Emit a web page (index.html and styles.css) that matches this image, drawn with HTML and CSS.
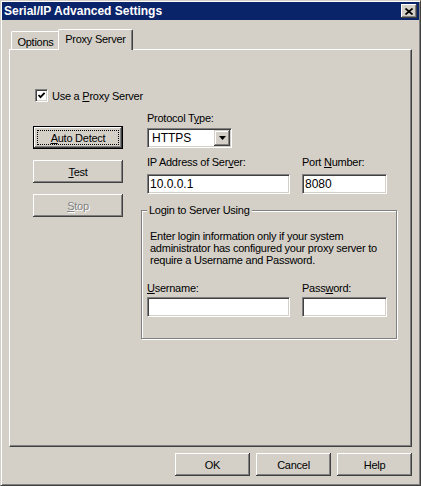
FILE: index.html
```html
<!DOCTYPE html>
<html lang="en">
<head>
    <meta charset="UTF-8">
    <title>Serial/IP Advanced Settings</title>
    <link rel="stylesheet" href="styles.css">
</head>
<body>
    <div class="window">
        <div class="titlebar">
            <span class="title">Serial/IP Advanced Settings</span>
            <span class="close-btn">
                <svg width="8" height="7" viewBox="0 0 8 7"><path d="M0.5 0.5 L7.5 6.5 M7.5 0.5 L0.5 6.5" stroke="#000" stroke-width="1.7"/></svg>
            </span>
        </div>

        <div class="tabs">
            <div class="tab">Options</div>
            <div class="tab tab-active">Proxy Server</div>
        </div>

        <div class="panel">
            <div class="check-row">
                <span class="checkbox">
                    <svg width="9" height="9" viewBox="0 0 9 9"><path d="M1.5 4 L3.5 6.2 L7.6 1.8" fill="none" stroke="#000" stroke-width="1.8"/></svg>
                </span>
                <span>Use a <u>P</u>roxy Server</span>
            </div>

            <div class="main">
                <div class="side">
                    <div class="btn btn-default"><span class="focus"><u>A</u>uto Detect</span></div>
                    <div class="btn"><span><u>T</u>est</span></div>
                    <div class="btn btn-disabled"><span><u>S</u>top</span></div>
                </div>

                <div class="fields">
                    <div class="label">Protocol T<u>y</u>pe:</div>
                    <div class="select">
                        <span class="select-value">HTTPS</span>
                        <span class="select-arrow">
                            <svg width="7" height="4" viewBox="0 0 7 4"><path d="M0 0 H7 L3.5 4 Z" fill="#000"/></svg>
                        </span>
                    </div>

                    <div class="pair pair-ip">
                        <div class="col-wide">
                            <div class="label">IP Address of Ser<u>v</u>er:</div>
                            <div class="input">10.0.0.1</div>
                        </div>
                        <div class="col-narrow">
                            <div class="label">Port <u>N</u>umber:</div>
                            <div class="input">8080</div>
                        </div>
                    </div>

                    <div class="group">
                        <div class="group-title">Login to Server Using</div>
                        <p class="note">Enter login information only if your system<br>administrator has configured your proxy server to<br>require a Username and Password.</p>
                        <div class="pair pair-login">
                            <div class="col-wide">
                                <div class="label"><u>U</u>sername:</div>
                                <div class="input"></div>
                            </div>
                            <div class="col-narrow">
                                <div class="label">Pass<u>w</u>ord:</div>
                                <div class="input"></div>
                            </div>
                        </div>
                    </div>
                </div>
            </div>
        </div>

        <div class="footer">
            <div class="btn btn-footer"><span>OK</span></div>
            <div class="btn btn-footer"><span>Cancel</span></div>
            <div class="btn btn-footer"><span>Help</span></div>
        </div>
    </div>
</body>
</html>
```

FILE: styles.css
```css
body {
    margin: 0;
    font-family: "Liberation Sans", Arial, sans-serif;
    font-size: 11px;
    letter-spacing: -0.25px;
    color: #000;
    background: #d4d0c8;
}
u {
    text-decoration: underline;
    text-underline-offset: 1px;
}
.window {
    width: 421px;
    height: 486px;
    box-sizing: border-box;
    background: #d4d0c8;
    border: 1px solid;
    border-color: #d4d0c8 #404040 #404040 #d4d0c8;
    box-shadow: inset 1px 1px #fff, inset -1px -1px #808080;
    padding: 1px;
    display: flex;
    flex-direction: column;
}
.titlebar {
    height: 18px;
    flex: none;
    background: #0a246a;
    color: #fff;
    display: flex;
    align-items: center;
    justify-content: space-between;
    padding: 0 2px 0 2px;
    font-weight: bold;
    font-size: 12px;
    letter-spacing: 0;
}
.close-btn {
    width: 16px;
    height: 14px;
    box-sizing: border-box;
    background: #d4d0c8;
    box-shadow: inset -1px -1px #404040, inset 1px 1px #fff, inset -2px -2px #808080;
    display: flex;
    align-items: center;
    justify-content: center;
}
.tabs {
    flex: none;
    height: 20px;
    margin-top: 9px;
    padding-left: 9px;
    display: flex;
    align-items: flex-end;
}
.tab {
    height: 18px;
    width: 49px;
    box-sizing: border-box;
    border: 1px solid;
    border-color: #fff #404040 transparent #fff;
    border-bottom: none;
    border-radius: 2px 2px 0 0;
    box-shadow: inset -1px 0 #808080;
    display: flex;
    align-items: center;
    justify-content: center;
    padding-top: 2px;
}
.tab-active {
    position: relative;
    z-index: 1;
    width: 75px;
    height: 21px;
    margin-left: -2px;
    margin-bottom: -1px;
    background: #d4d0c8;
    padding-top: 0;
    padding-bottom: 2px;
}
.panel {
    flex: 1;
    margin: 0 7px;
    border: 1px solid;
    border-color: #fff #404040 #404040 #fff;
    box-shadow: inset -1px -1px #808080;
}
.check-row {
    margin: 39px 0 0 25px;
    height: 13px;
    display: flex;
    align-items: center;
}
.checkbox {
    width: 13px;
    height: 13px;
    box-sizing: border-box;
    margin-right: 4px;
    background: #fff;
    border: 1px solid;
    border-color: #808080 #fff #fff #808080;
    box-shadow: inset 1px 1px #404040, inset -1px -1px #d4d0c8;
    display: flex;
    align-items: center;
    justify-content: center;
}
.main {
    margin-top: 10px;
    padding-left: 23px;
    display: flex;
}
.side {
    width: 90px;
    margin: 14px 24px 0 0;
    display: flex;
    flex-direction: column;
    gap: 11px;
}
.btn {
    height: 23px;
    box-sizing: border-box;
    background: #d4d0c8;
    box-shadow: inset -1px -1px #404040, inset 1px 1px #fff, inset -2px -2px #808080;
    display: flex;
    align-items: center;
    justify-content: center;
    white-space: nowrap;
}
.btn-default {
    border: 1px solid #000;
    padding: 3px;
    align-items: stretch;
}
.focus {
    flex: 1;
    outline: 1px dotted #000;
    outline-offset: -1px;
    display: flex;
    align-items: center;
    justify-content: center;
}
.btn-disabled {
    color: #808080;
    text-shadow: 1px 1px 0 #fff;
}
.fields {
    width: 240px;
    margin-top: 0;
}
.label {
    line-height: 13px;
    height: 13px;
    white-space: nowrap;
}
.select {
    margin-top: 3px;
    width: 85px;
    height: 20px;
    box-sizing: border-box;
    background: #fff;
    border: 1px solid;
    border-color: #808080 #fff #fff #808080;
    box-shadow: inset 1px 1px #404040, inset -1px -1px #d4d0c8;
    display: flex;
    align-items: center;
    padding: 1px;
    font-size: 12px;
    letter-spacing: 0;
}
.select-value {
    flex: 1;
    padding-left: 3px;
}
.select-arrow {
    width: 16px;
    height: 16px;
    box-sizing: border-box;
    background: #d4d0c8;
    box-shadow: inset -1px -1px #404040, inset 1px 1px #d4d0c8, inset -2px -2px #808080, inset 2px 2px #fff;
    display: flex;
    align-items: center;
    justify-content: center;
}
.pair {
    display: flex;
    gap: 12px;
}
.pair-ip {
    margin-top: 8px;
}
.pair-ip .input {
    margin-top: 5px;
}
.col-wide {
    width: 143px;
}
.col-narrow {
    width: 85px;
}
.input {
    height: 20px;
    box-sizing: border-box;
    background: #fff;
    border: 1px solid;
    border-color: #808080 #fff #fff #808080;
    box-shadow: inset 1px 1px #404040, inset -1px -1px #d4d0c8;
    padding: 0 2px;
    line-height: 18px;
    font-size: 12px;
    letter-spacing: 0;
}
.group {
    margin: 16px 0 0 -6px;
    width: 256px;
    height: 129px;
    box-sizing: border-box;
    border: 1px solid #808080;
    box-shadow: inset 1px 1px #fff, 1px 1px #fff;
    padding: 0 5px;
}
.group-title {
    width: max-content;
    margin: -7px 0 0 0;
    padding: 0 2px;
    line-height: 13px;
    background: #d4d0c8;
}
.note {
    margin: 13px 0 0 3px;
    line-height: 12px;
    white-space: nowrap;
}
.pair-login {
    margin-top: 16px;
}
.pair-login .input {
    margin-top: 2px;
}
.footer {
    flex: none;
    display: flex;
    justify-content: flex-end;
    gap: 6px;
    padding: 6px 7px 8px 0;
}
.btn-footer {
    width: 75px;
}
```
